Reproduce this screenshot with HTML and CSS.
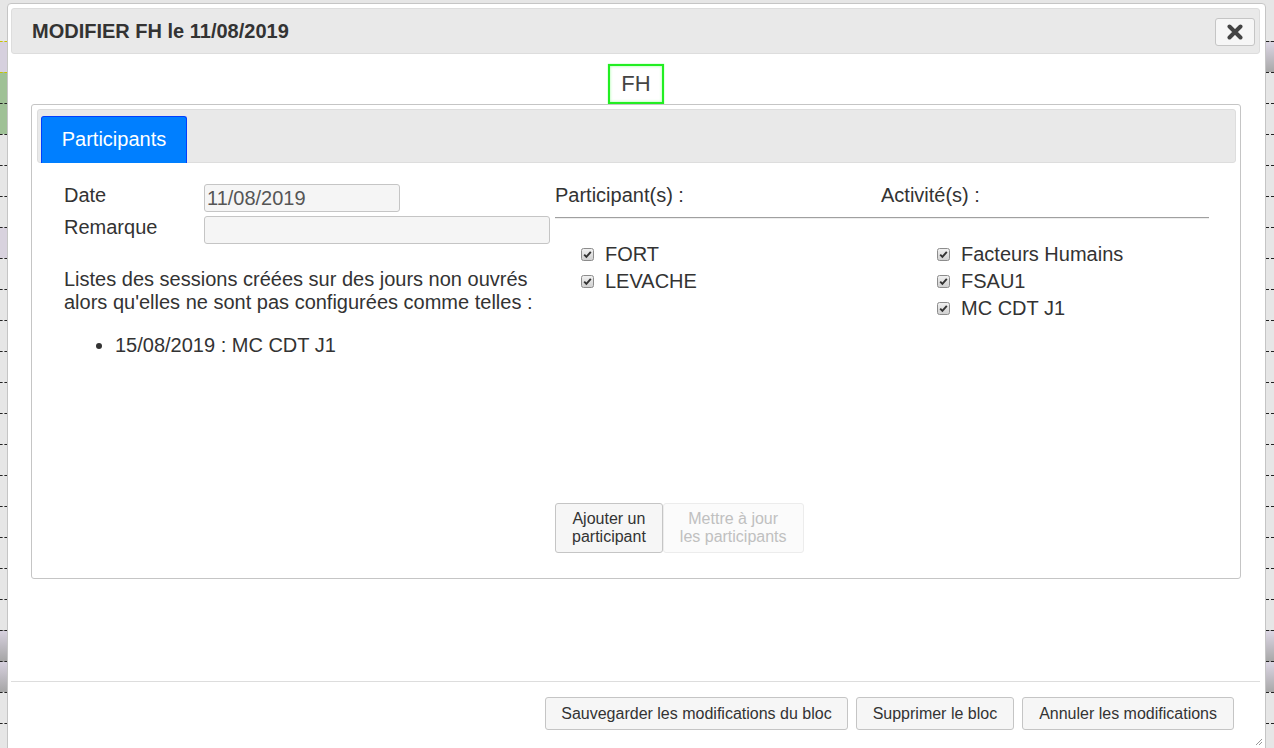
FILE: index.html
```html
<!DOCTYPE html>
<html lang="fr">
<head>
<meta charset="utf-8">
<title>Modifier FH</title>
<link rel="stylesheet" href="styles.css">
</head>
<body>
<div class="strip strip-left">
  <div class="cell c-gray"></div>
  <div class="cell c-purple dash-y"></div>
  <div class="cell c-green dash-y"></div>
  <div class="cell c-green dash"></div>
  <div class="cell c-gray dash"></div>
  <div class="cell c-gray dash"></div>
  <div class="cell c-gray dash"></div>
  <div class="cell c-purple2 dash"></div>
  <div class="cell c-gray dash"></div>
  <div class="cell c-gray dash"></div>
  <div class="cell c-gray dash"></div>
  <div class="cell c-gray dash"></div>
  <div class="cell c-gray dash"></div>
  <div class="cell c-gray dash"></div>
  <div class="cell c-gray dash"></div>
  <div class="cell c-gray dash"></div>
  <div class="cell c-gray dash"></div>
  <div class="cell c-gray dash"></div>
  <div class="cell c-gray dash"></div>
  <div class="cell c-gray dash"></div>
  <div class="cell c-grad dash"></div>
  <div class="cell c-grad dash"></div>
  <div class="cell c-gray dash"></div>
  <div class="cell c-gray dash"></div>
</div>

<div class="dialog">
  <div class="titlebar">
    <span class="title">MODIFIER FH le 11/08/2019</span>
    <button class="close" type="button" aria-label="Fermer">
      <svg width="16" height="16" viewBox="0 0 16 16"><path d="M2.5 2.5 L13.5 13.5 M13.5 2.5 L2.5 13.5" stroke="#444" stroke-width="4" stroke-linecap="round"/></svg>
    </button>
  </div>

  <div class="content">
    <div class="fh">FH</div>
    <div class="tabs">
      <div class="tabbar">
        <div class="tab">Participants</div>
      </div>
      <div class="tabbody">
        <div class="col-left">
          <div class="formrow">
            <span class="lbl">Date</span>
            <input class="inp inp-date" type="text" value="11/08/2019">
          </div>
          <div class="formrow">
            <span class="lbl">Remarque</span>
            <input class="inp inp-rem" type="text" value="">
          </div>
          <p class="note">Listes des sessions créées sur des jours non ouvrés alors qu'elles ne sont pas configurées comme telles :</p>
          <ul class="sessions">
            <li>15/08/2019 : MC CDT J1</li>
          </ul>
        </div>

        <div class="col col-part">
          <div class="colhead">Participant(s) :</div>
          <hr class="rule">
          <ul class="checks checks-part">
            <li><span class="cb"><svg width="13" height="13" viewBox="0 0 13 13"><defs><linearGradient id="g1" x1="0" y1="0" x2="0" y2="1"><stop offset="0" stop-color="#f2f2f2"/><stop offset="1" stop-color="#cfcfcf"/></linearGradient></defs><rect x="0.5" y="0.5" width="12" height="12" rx="2" fill="url(#g1)" stroke="#8c8c8c"/><path d="M3.2 6.6 L5.4 8.9 L9.8 3.9" fill="none" stroke="#333" stroke-width="1.9"/></svg></span>FORT</li>
            <li><span class="cb"><svg width="13" height="13" viewBox="0 0 13 13"><rect x="0.5" y="0.5" width="12" height="12" rx="2" fill="url(#g1)" stroke="#8c8c8c"/><path d="M3.2 6.6 L5.4 8.9 L9.8 3.9" fill="none" stroke="#333" stroke-width="1.9"/></svg></span>LEVACHE</li>
          </ul>
          <div class="btnpair">
            <button class="btn btn-two" type="button">Ajouter un<br>participant</button>
            <button class="btn btn-two btn-disabled" type="button" disabled>Mettre à jour<br>les participants</button>
          </div>
        </div>

        <div class="col col-act">
          <div class="colhead">Activité(s) :</div>
          <hr class="rule">
          <ul class="checks checks-act">
            <li><span class="cb"><svg width="13" height="13" viewBox="0 0 13 13"><rect x="0.5" y="0.5" width="12" height="12" rx="2" fill="url(#g1)" stroke="#8c8c8c"/><path d="M3.2 6.6 L5.4 8.9 L9.8 3.9" fill="none" stroke="#333" stroke-width="1.9"/></svg></span>Facteurs Humains</li>
            <li><span class="cb"><svg width="13" height="13" viewBox="0 0 13 13"><rect x="0.5" y="0.5" width="12" height="12" rx="2" fill="url(#g1)" stroke="#8c8c8c"/><path d="M3.2 6.6 L5.4 8.9 L9.8 3.9" fill="none" stroke="#333" stroke-width="1.9"/></svg></span>FSAU1</li>
            <li><span class="cb"><svg width="13" height="13" viewBox="0 0 13 13"><rect x="0.5" y="0.5" width="12" height="12" rx="2" fill="url(#g1)" stroke="#8c8c8c"/><path d="M3.2 6.6 L5.4 8.9 L9.8 3.9" fill="none" stroke="#333" stroke-width="1.9"/></svg></span>MC CDT J1</li>
          </ul>
        </div>
      </div>
    </div>
  </div>

  <div class="footer">
    <button class="btn btn-foot" type="button">Sauvegarder les modifications du bloc</button>
    <button class="btn btn-foot" type="button">Supprimer le bloc</button>
    <button class="btn btn-foot" type="button">Annuler les modifications</button>
  </div>

  <svg class="grip" width="8" height="8" viewBox="0 0 8 8"><path d="M7 1 L1 7 M7 4 L4 7" stroke="#999" stroke-width="1"/></svg>
</div>

<div class="strip strip-right">
  <div class="cell c-gray"></div>
  <div class="cell c-purplegrad dash"></div>
  <div class="cell c-gray dash"></div>
  <div class="cell c-gray dash"></div>
  <div class="cell c-gray dash"></div>
  <div class="cell c-gray dash"></div>
  <div class="cell c-gray dash"></div>
  <div class="cell c-gray dash"></div>
  <div class="cell c-gray dash"></div>
  <div class="cell c-gray dash"></div>
  <div class="cell c-gray dash"></div>
  <div class="cell c-gray dash"></div>
  <div class="cell c-gray dash"></div>
  <div class="cell c-gray dash"></div>
  <div class="cell c-gray dash"></div>
  <div class="cell c-gray dash"></div>
  <div class="cell c-gray dash"></div>
  <div class="cell c-gray dash"></div>
  <div class="cell c-gray dash"></div>
  <div class="cell c-gray dash"></div>
  <div class="cell c-purplegrad dash"></div>
  <div class="cell c-purplegrad dash"></div>
  <div class="cell c-gray dash"></div>
  <div class="cell c-gray dash"></div>
</div>
</body>
</html>
```

FILE: styles.css
```css
* { box-sizing: border-box; }

html, body {
  margin: 0;
  padding: 0;
}

body {
  width: 1274px;
  height: 748px;
  overflow: hidden;
  display: flex;
  align-items: flex-start;
  background: #e6e6e6;
  font-family: "Liberation Sans", Arial, sans-serif;
  color: #333;
}

/* background strips */
.strip {
  display: flex;
  flex-direction: column;
  height: 748px;
  flex: none;
}
.strip-left { width: 7px; }
.strip-right { width: 8px; }
.cell { height: 31px; flex: none; }
.cell:first-child { height: 41px; }
.dash { border-top: 1px dashed #222; }
.dash-y { border-top: 1px dashed #c8c400; }
.c-gray { background: #e6e6e6; }
.c-purple { background: #d6d0de; }
.c-purple2 { background: #d8d2de; }
.c-green { background: #9fc196; }
.c-grad { background: linear-gradient(#d6d0de, #a6a6a6); }
.c-purplegrad { background: linear-gradient(#dcd6e4, #a8a8a8); }

/* dialog */
.dialog {
  position: relative;
  width: 1259px;
  height: 760px;
  margin-top: 3px;
  background: #fff;
  border: 1px solid #c5c5c5;
  border-radius: 4px;
  padding: 4px 5px 0 3px;
  flex: none;
}

.titlebar {
  height: 46px;
  background: #e9e9e9;
  border: 1px solid #dddddd;
  border-radius: 3px;
  display: flex;
  align-items: center;
  justify-content: space-between;
  padding: 0 4px 0 20px;
}
.title {
  font-size: 20px;
  font-weight: bold;
  color: #333;
}
.close {
  width: 40px;
  height: 28px;
  margin-top: 1px;
  background: #f6f6f6;
  border: 1px solid #c5c5c5;
  border-radius: 3px;
  padding: 0;
  display: flex;
  align-items: center;
  justify-content: center;
}

.content {
  padding: 0 19px 0 20px;
}

.fh {
  width: 56px;
  height: 40px;
  margin: 10px auto 0;
  border: 2px solid #22ee22;
  box-shadow: inset 0 0 3px #9f9, 0 0 1px #6f6;
  font-size: 22px;
  line-height: 36px;
  text-align: center;
  color: #444;
}

.tabs {
  border: 1px solid #c5c5c5;
  border-radius: 3px;
  padding: 4px 4px 25px 5px;
}
.tabbar {
  height: 54px;
  background: #e9e9e9;
  border: 1px solid #dddddd;
  border-radius: 3px;
  padding: 6px 3px 0;
  display: flex;
  align-items: flex-end;
}
.tab {
  width: 146px;
  height: 47px;
  margin-bottom: -1px;
  background: #007fff;
  border: 1px solid #003eff;
  border-bottom: 0;
  border-radius: 3px 3px 0 0;
  color: #fff;
  font-size: 20px;
  line-height: 45px;
  text-align: center;
}

.tabbody {
  display: grid;
  grid-template-columns: 491px 326px 1fr;
  padding: 21px 28px 0 27px;
  font-size: 20px;
  color: #333;
}

.formrow {
  display: flex;
  align-items: flex-start;
  height: 28px;
  margin-bottom: 4px;
}
.lbl {
  width: 140px;
  line-height: 23px;
  flex: none;
}
.inp {
  height: 28px;
  border: 1px solid #c5c5c5;
  border-radius: 3px;
  background: #f5f5f5;
  font-family: "Liberation Sans", Arial, sans-serif;
  font-size: 20px;
  color: #555;
  padding: 1px 2px;
  margin: 0;
}
.inp-date { width: 196px; }
.inp-rem { width: 346px; }

.note {
  margin: 24px 0 0;
  line-height: 23px;
}
.sessions {
  margin: 20px 0 0;
  padding-left: 51px;
  line-height: 23px;
}

.col {
  display: flex;
  flex-direction: column;
  min-height: 369px;
}
.colhead {
  line-height: 23px;
}
.rule {
  margin: 10px 0 0;
  border: 0;
  border-top: 1px solid #a0a0a0;
  border-bottom: 1px solid #eeeeee;
  height: 0;
}
.col-act .rule { margin-right: -1px; }

.checks {
  list-style: none;
  margin: 22px 0 0;
  padding: 0;
}
.checks li {
  display: flex;
  align-items: center;
  line-height: 27px;
}
.checks-part { padding-left: 26px; }
.checks-act { padding-left: 56px; }
.cb {
  display: inline-flex;
  width: 13px;
  height: 13px;
  margin-right: 11px;
}

.btnpair {
  margin-top: auto;
  display: flex;
}

.btn {
  font-family: "Liberation Sans", Arial, sans-serif;
  font-size: 16px;
  color: #333;
  background: #f6f6f6;
  border: 1px solid #c5c5c5;
  border-radius: 3px;
  margin: 0;
}
.btn-two {
  height: 50px;
  padding: 6px 16px;
  line-height: 18px;
}
.btn-disabled {
  color: #c0c0c0;
  background: #fbfbfb;
  border-color: #ececec;
}

.footer {
  margin-top: 102px;
  border-top: 1px solid #dddddd;
  padding: 15px 26px 0 0;
  display: flex;
  justify-content: flex-end;
  gap: 8px;
}
.btn-foot {
  height: 33px;
  padding: 0 16px;
}
.btn-foot:first-child { padding: 0 15px; }

.grip {
  position: absolute;
  right: 2px;
  top: 734px;
}
```
